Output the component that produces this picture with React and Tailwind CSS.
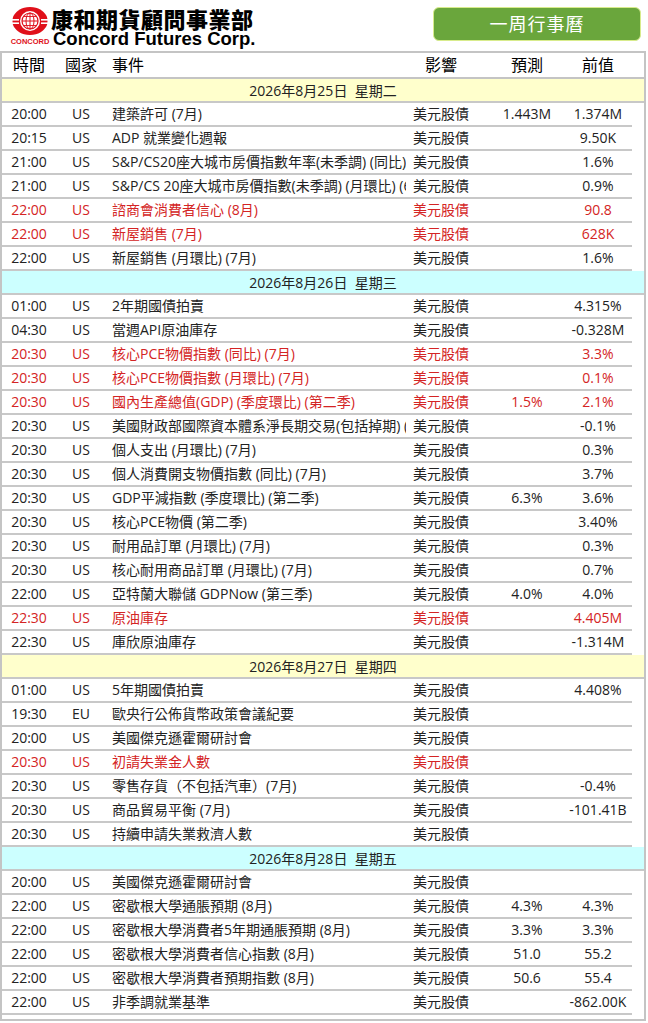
const RED = "text-[#d42424]";

const groups = [
  {
    date: "2026年8月25日  星期二",
    bg: "bg-[#ffffcc]",
    rows: [
      ["20:00", "US", "建築許可 (7月)", "1.443M", "1.374M"],
      ["20:15", "US", "ADP 就業變化週報", "", "9.50K"],
      ["21:00", "US", "S&P/CS20座大城市房價指數年率(未季調) (同比) (6月)", "", "1.6%"],
      ["21:00", "US", "S&P/CS 20座大城市房價指數(未季調) (月環比) (6月)", "", "0.9%"],
      ["22:00", "US", "諮商會消費者信心 (8月)", "", "90.8", true],
      ["22:00", "US", "新屋銷售 (7月)", "", "628K", true],
      ["22:00", "US", "新屋銷售 (月環比) (7月)", "", "1.6%"],
    ],
  },
  {
    date: "2026年8月26日  星期三",
    bg: "bg-[#ccffff]",
    rows: [
      ["01:00", "US", "2年期國債拍賣", "", "4.315%"],
      ["04:30", "US", "當週API原油庫存", "", "-0.328M"],
      ["20:30", "US", "核心PCE物價指數 (同比) (7月)", "", "3.3%", true],
      ["20:30", "US", "核心PCE物價指數 (月環比) (7月)", "", "0.1%", true],
      ["20:30", "US", "國內生產總值(GDP) (季度環比) (第二季)", "1.5%", "2.1%", true],
      ["20:30", "US", "美國財政部國際資本體系淨長期交易(包括掉期) (月度)", "", "-0.1%"],
      ["20:30", "US", "個人支出 (月環比) (7月)", "", "0.3%"],
      ["20:30", "US", "個人消費開支物價指數 (同比) (7月)", "", "3.7%"],
      ["20:30", "US", "GDP平減指數 (季度環比) (第二季)", "6.3%", "3.6%"],
      ["20:30", "US", "核心PCE物價 (第二季)", "", "3.40%"],
      ["20:30", "US", "耐用品訂單 (月環比) (7月)", "", "0.3%"],
      ["20:30", "US", "核心耐用商品訂單 (月環比) (7月)", "", "0.7%"],
      ["22:00", "US", "亞特蘭大聯儲 GDPNow (第三季)", "4.0%", "4.0%"],
      ["22:30", "US", "原油庫存", "", "4.405M", true],
      ["22:30", "US", "庫欣原油庫存", "", "-1.314M"],
    ],
  },
  {
    date: "2026年8月27日  星期四",
    bg: "bg-[#ffffcc]",
    rows: [
      ["01:00", "US", "5年期國債拍賣", "", "4.408%"],
      ["19:30", "EU", "歐央行公佈貨幣政策會議紀要", "", ""],
      ["20:00", "US", "美國傑克遜霍爾研討會", "", ""],
      ["20:30", "US", "初請失業金人數", "", "", true],
      ["20:30", "US", "零售存貨（不包括汽車）(7月)", "", "-0.4%"],
      ["20:30", "US", "商品貿易平衡 (7月)", "", "-101.41B"],
      ["20:30", "US", "持續申請失業救濟人數", "", ""],
    ],
  },
  {
    date: "2026年8月28日  星期五",
    bg: "bg-[#ccffff]",
    rows: [
      ["20:00", "US", "美國傑克遜霍爾研討會", "", ""],
      ["22:00", "US", "密歇根大學通脹預期 (8月)", "4.3%", "4.3%"],
      ["22:00", "US", "密歇根大學消費者5年期通脹預期 (8月)", "3.3%", "3.3%"],
      ["22:00", "US", "密歇根大學消費者信心指數 (8月)", "51.0", "55.2"],
      ["22:00", "US", "密歇根大學消費者預期指數 (8月)", "50.6", "55.4"],
      ["22:00", "US", "非季調就業基準", "", "-862.00K"],
    ],
  },
];

const cols = "grid grid-cols-[54px_50px_300px_70px_16px_70px_72px]";

function Emblem() {
  return (
    <svg width="40" height="30" viewBox="0 0 40 30">
      <path
        d="M20 1 C29 1 33 5 36 9 C38 12 38 18 36 21 C33 25 29 29 20 29 C11 29 7 25 4 21 C2 18 2 12 4 9 C7 5 11 1 20 1 Z"
        fill="#e0101a"
      />
      <rect x="0" y="13" width="9" height="1.6" fill="#fff" />
      <rect x="0" y="16.4" width="9" height="1.6" fill="#fff" />
      <rect x="31" y="13" width="9" height="1.6" fill="#fff" />
      <rect x="31" y="16.4" width="9" height="1.6" fill="#fff" />
      <circle cx="20" cy="15" r="10" fill="#fff" />
      <circle cx="20" cy="15" r="8" fill="none" stroke="#e0101a" strokeWidth="1.2" />
      <ellipse cx="20" cy="15" rx="4" ry="8" fill="none" stroke="#e0101a" strokeWidth="1" />
      <line x1="20" y1="7" x2="20" y2="23" stroke="#e0101a" strokeWidth="1" />
      <line x1="12" y1="15" x2="28" y2="15" stroke="#e0101a" strokeWidth="1" />
      <line x1="13.5" y1="10.5" x2="26.5" y2="10.5" stroke="#e0101a" strokeWidth="0.9" />
      <line x1="13.5" y1="19.5" x2="26.5" y2="19.5" stroke="#e0101a" strokeWidth="0.9" />
    </svg>
  );
}

function Logo() {
  return (
    <div className="flex items-start pl-[9px] pt-[6px]">
      <div className="flex flex-col items-center w-[42px]">
        <Emblem />
        <div className="text-[7.5px] leading-none font-bold text-[#e0101a] mt-[2px] font-['Liberation_Sans',sans-serif]">
          CONCORD
        </div>
      </div>
      <div className="flex flex-col">
        <div className="text-[22px] leading-[24px] font-black text-black tracking-[0.5px] font-['Noto_Sans_CJK_TC',sans-serif]">
          康和期貨顧問事業部
        </div>
        <div className="text-[18.5px] leading-[18px] font-bold text-black font-['Liberation_Sans',sans-serif] ml-[2px]">
          Concord Futures Corp.
        </div>
      </div>
    </div>
  );
}

function DataRow({ row }) {
  const [time, country, event, forecast, prev, red] = row;
  const color = red ? RED : "text-[#222]";
  return (
    <div className={`${cols} ${color} h-[24px] w-[630px] border-b-2 border-[#c8c8c8] items-center leading-[22px]`}>
      <div className="text-center">{time}</div>
      <div className="text-center">{country}</div>
      <div className="pl-[6px] whitespace-nowrap overflow-hidden">{event}</div>
      <div className="text-center whitespace-nowrap">美元股債</div>
      <div />
      <div className="text-center whitespace-nowrap">{forecast}</div>
      <div className="flex justify-center whitespace-nowrap">{prev}</div>
    </div>
  );
}

export default function App() {
  return (
    <div className="w-[648px] bg-white text-[14px] font-['Open_Sans','Noto_Sans_CJK_TC',sans-serif]">
      <div className="flex justify-between h-[51px]">
        <Logo />
        <div className="mt-[7px] mr-[7px] w-[208px] h-[34px] rounded-[6px] bg-[#6aa63c] border border-[#d8ec8c] flex items-center justify-center text-white text-[18px] tracking-[1px]">
          一周行事曆
        </div>
      </div>
      <div className="w-[646px] border-2 border-[#c4c4c4] pb-[4px]">
        <div className={`${cols} h-[26px] items-center border-b-2 border-[#c4c4c4] text-[16px] text-black`}>
          <div className="text-center">時間</div>
          <div className="text-center">國家</div>
          <div className="pl-[6px]">事件</div>
          <div className="text-center">影響</div>
          <div />
          <div className="text-center">預測</div>
          <div className="text-center">前值</div>
        </div>
        {groups.map((g) => (
          <div key={g.date}>
            <div className={`${g.bg} h-[24px] border-b-2 border-[#c8c8c8] flex items-center justify-center text-[#222] whitespace-pre`}>
              {g.date}
            </div>
            {g.rows.map((r, i) => (
              <DataRow key={i} row={r} />
            ))}
          </div>
        ))}
      </div>
    </div>
  );
}
